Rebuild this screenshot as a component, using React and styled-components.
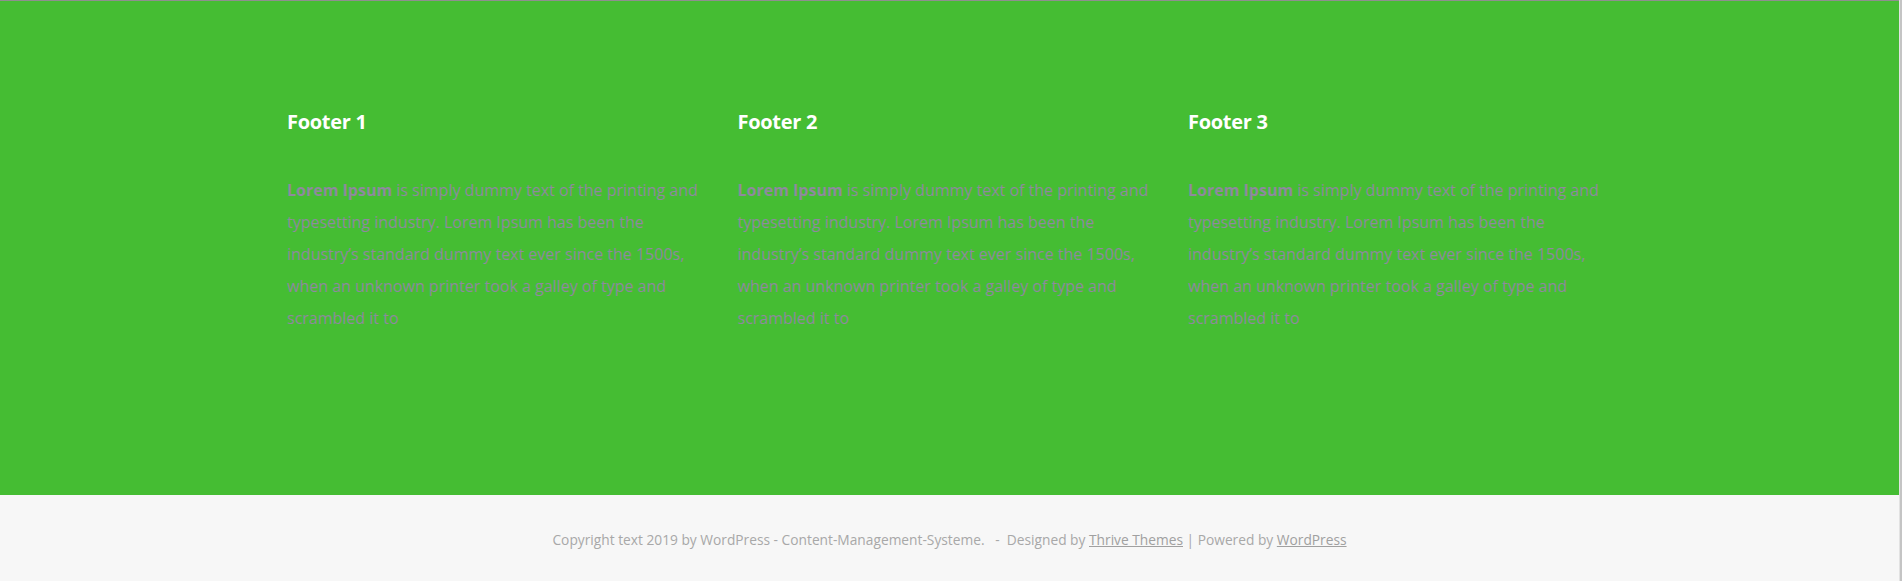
import React from 'react'
import styled, { createGlobalStyle } from 'styled-components'

const GlobalStyle = createGlobalStyle`
  html, body {
    margin: 0;
    padding: 0;
    background: #f7f7f7;
  }
  body {
    font-family: "Open Sans", "Liberation Sans", sans-serif;
  }
`

const columns = [
  { id: 1, title: 'Footer 1' },
  { id: 2, title: 'Footer 2' },
  { id: 3, title: 'Footer 3' },
]

function App() {
  return (
    <Page>
      <GlobalStyle />
      <Main>
        <Widgets>
          <Grid>
            {columns.map((col) => (
              <Column key={col.id}>
                <Heading>{col.title}</Heading>
                <Text>
                  <strong>Lorem Ipsum</strong> is simply dummy text of the printing and
                  typesetting industry. Lorem Ipsum has been the industry’s standard dummy
                  text ever since the 1500s, when an unknown printer took a galley of type
                  and scrambled it to
                </Text>
              </Column>
            ))}
          </Grid>
        </Widgets>
        <Bottom>
          <Copy>
            Copyright text 2019 by WordPress - Content-Management-Systeme.&nbsp;&nbsp; -&nbsp;
            Designed by <FootLink href="#">Thrive Themes</FootLink> | Powered by{' '}
            <FootLink href="#">WordPress</FootLink>
          </Copy>
        </Bottom>
      </Main>
      <Edge />
    </Page>
  )
}

const Page = styled.div`
  display: flex;
  width: 1902px;
  height: 581px;
  overflow: hidden;
`

const Main = styled.div`
  width: 1899px;
  display: flex;
  flex-direction: column;
`

const Edge = styled.div`
  width: 3px;
  border-left: 1px solid #e2e2e2;
  background: #c4c4c4;
  box-sizing: border-box;
`

const Widgets = styled.div`
  background: #45bd33;
  border-top: 1px solid #8f8f8f;
  height: 495px;
  box-sizing: border-box;
  padding-top: 103px;
`

const Grid = styled.div`
  display: grid;
  grid-template-columns: repeat(3, 424px);
  column-gap: 26.5px;
  justify-content: center;
`

const Column = styled.div`
  padding-right: 10px;
`

const Heading = styled.h4`
  margin: 3px 0 37px;
  color: #fff;
  font-size: 20px;
  line-height: 30px;
  font-weight: 700;
  letter-spacing: -0.3px;
`

const Text = styled.p`
  margin: 0;
  color: #8e8a9e;
  font-size: 16px;
  line-height: 32px;

  strong {
    font-weight: 700;
  }
`

const Bottom = styled.div`
  flex: 1;
  background: #f7f7f7;
  display: flex;
  justify-content: center;
  padding-top: 33px;
`

const Copy = styled.p`
  margin: 0;
  color: #a8a8a8;
  font-size: 13.75px;
  line-height: 24px;
  white-space: nowrap;
`

const FootLink = styled.a`
  color: #a0a0a0;
  text-decoration: underline;
`

export default App
